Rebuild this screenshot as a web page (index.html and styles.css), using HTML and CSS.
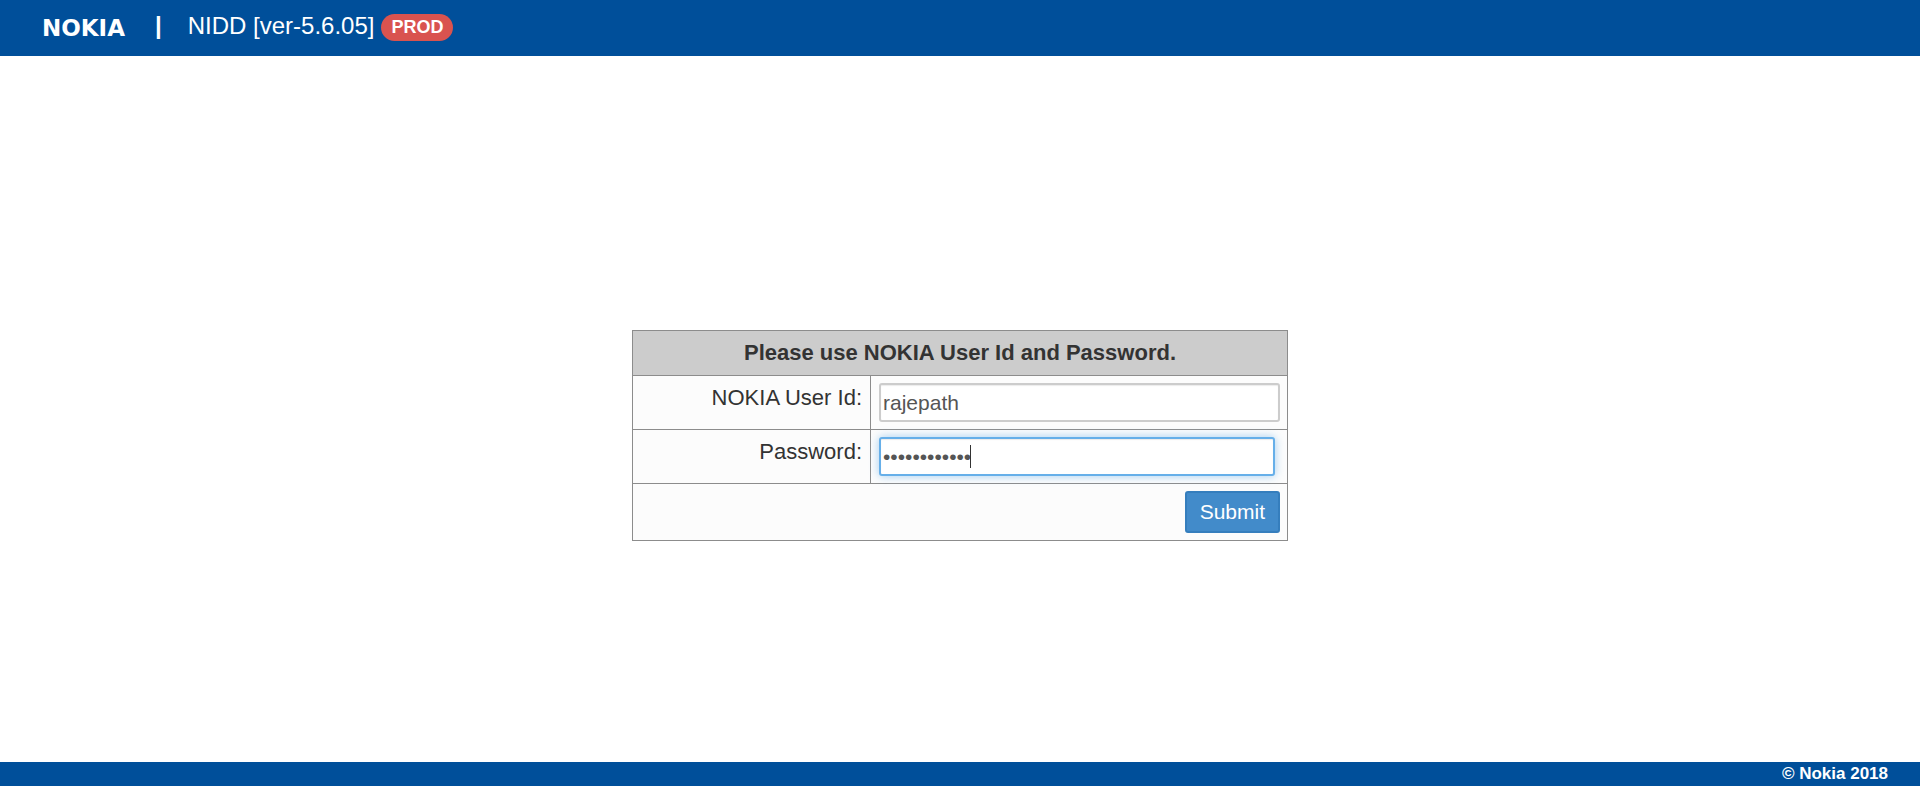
FILE: index.html
```html
<!DOCTYPE html>
<html lang="en">
<head>
<meta charset="utf-8">
<title>NIDD</title>
<link rel="stylesheet" href="styles.css">
</head>
<body>
<header class="topbar">
  <span class="logo">NOKIA</span>
  <span class="divider">|</span>
  <span class="app-name">NIDD [ver-5.6.05]</span>
  <span class="env-badge">PROD</span>
</header>
<main class="content">
  <form class="login">
    <table class="login-table">
      <thead>
        <tr><th colspan="2">Please use NOKIA User Id and Password.</th></tr>
      </thead>
      <tbody>
        <tr>
          <td class="label-cell"><label for="user">NOKIA User Id:</label></td>
          <td class="field-cell"><input class="field" id="user" type="text" value="rajepath"></td>
        </tr>
        <tr>
          <td class="label-cell"><label for="password">Password:</label></td>
          <td class="field-cell">
            <div class="password-wrap">
              <input class="field field-active" id="password" type="password" value="abcdefghijkl">
              <span class="caret"></span>
            </div>
          </td>
        </tr>
        <tr>
          <td class="action-cell" colspan="2"><button class="submit" type="submit">Submit</button></td>
        </tr>
      </tbody>
    </table>
  </form>
</main>
<footer class="footer">© Nokia 2018</footer>
</body>
</html>
```
FILE: styles.css
```css
* { box-sizing: border-box; }

body {
  margin: 0;
  min-height: 100vh;
  display: flex;
  flex-direction: column;
  background: #fff;
  color: #333;
  font-family: "Liberation Sans", Arial, sans-serif;
  font-size: 22px;
  line-height: 30px;
}

.topbar {
  display: flex;
  align-items: center;
  height: 56px;
  padding: 0 42px 4px;
  background: #004f9a;
  color: #fff;
  font-size: 24px;
}

.logo {
  font-family: "DejaVu Sans", sans-serif;
  font-size: 23px;
  font-weight: bold;
  padding-top: 4px;
}

.divider {
  margin: 0 26px 0 30px;
  font-weight: bold;
}

.env-badge {
  margin-left: 7px;
  padding: 0 10px;
  border-radius: 14px;
  background: #d9534f;
  font-size: 18px;
  font-weight: bold;
  line-height: 27px;
  margin-top: 3px;
}

.content {
  flex: 1;
  display: flex;
  align-items: center;
  justify-content: center;
  padding-top: 53px;
}

.login { width: 656px; }

.login-table {
  width: 100%;
  border-collapse: collapse;
  background: #fcfcfc;
}

.login-table th,
.login-table td {
  border: 1px solid #8c8c8c;
  padding: 7px;
  vertical-align: top;
}

.login-table th { background: #ccc; }

.login-table .label-cell {
  width: 238px;
  padding-right: 8px;
  text-align: right;
}

.login-table .field-cell { padding-left: 8px; }

.field {
  display: block;
  width: 100%;
  height: 39px;
  padding: 0 2px;
  border: 2px solid #ccc;
  border-radius: 3px;
  background: #fff;
  box-shadow: inset 0 1px 1px rgba(0, 0, 0, 0.08);
  color: #555;
  font-family: inherit;
  font-size: 21px;
}

.password-wrap {
  position: relative;
  margin-right: 5px;
}

.field-active {
  border-color: #66afe9;
  box-shadow: inset 0 1px 1px rgba(0, 0, 0, 0.08), 0 0 10px rgba(102, 175, 233, 0.6);
}

.caret {
  position: absolute;
  left: 91px;
  top: 8px;
  width: 1px;
  height: 23px;
  background: #333;
}

.action-cell { text-align: right; }

.submit {
  display: block;
  margin-left: auto;
  height: 42px;
  padding: 0 13px;
  border: 2px solid #357ebd;
  border-radius: 3px;
  background: #428bca;
  color: #fff;
  font-family: inherit;
  font-size: 21px;
}

.footer {
  padding: 0 32px;
  background: #004f9a;
  color: #fff;
  font-size: 17px;
  font-weight: bold;
  line-height: 24px;
  text-align: right;
}
```
